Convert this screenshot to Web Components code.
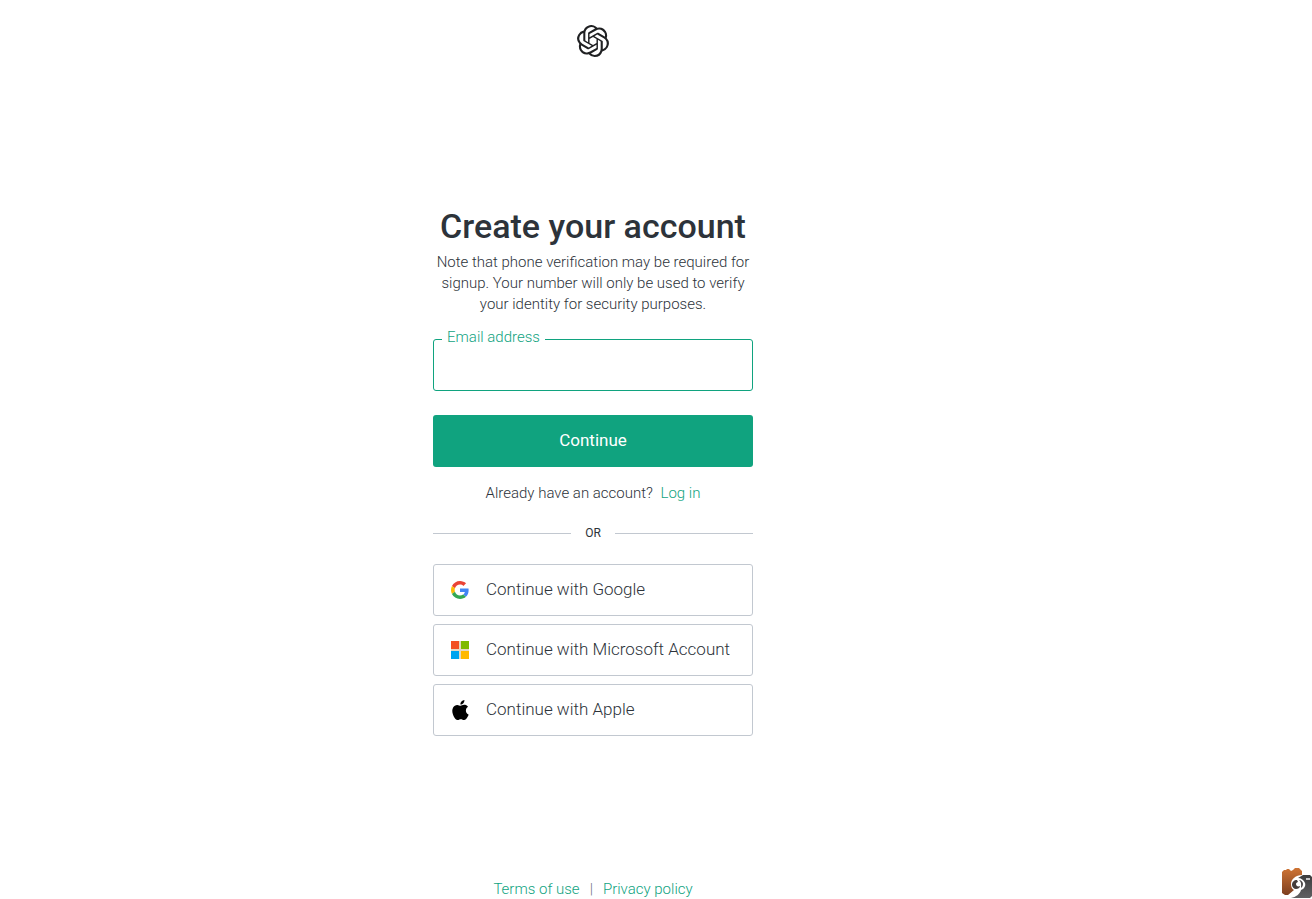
<!DOCTYPE html>
<html lang="en">
<head>
  <meta charset="utf-8">
  <meta name="viewport" content="width=device-width, initial-scale=1">
  <title>Create your account</title>
  <style>
    body {
      margin: 0;
      background: #fff;
      color: #2d333a;
      font-family: Roboto, 'Liberation Sans', sans-serif;
      font-size: 15px;
      font-weight: 300;
    }
  </style>
</head>
<body>
  <signup-page>
    <brand-logo slot="header"></brand-logo>
    <signup-form>
      <social-button provider="google">Continue with Google</social-button>
      <social-button provider="microsoft">Continue with Microsoft Account</social-button>
      <social-button provider="apple">Continue with Apple</social-button>
    </signup-form>
    <page-footer slot="footer"></page-footer>
  </signup-page>
  <capture-badge></capture-badge>

  <script>
    const icons = {
      google: /* html */`
        <svg viewBox="0 0 48 48" width="18" height="18" aria-hidden="true">
          <path fill="#EA4335" d="M24 9.5c3.54 0 6.71 1.22 9.21 3.6l6.85-6.85C35.9 2.38 30.47 0 24 0 14.62 0 6.51 5.38 2.56 13.22l7.98 6.19C12.43 13.72 17.74 9.5 24 9.5z"/>
          <path fill="#4285F4" d="M46.98 24.55c0-1.57-.15-3.09-.38-4.55H24v9.02h12.94c-.58 2.96-2.26 5.48-4.78 7.18l7.73 6c4.51-4.18 7.09-10.36 7.09-17.65z"/>
          <path fill="#FBBC05" d="M10.53 28.59c-.48-1.45-.76-2.99-.76-4.59s.27-3.14.76-4.59l-7.98-6.19C.92 16.46 0 20.12 0 24c0 3.88.92 7.54 2.56 10.78l7.97-6.19z"/>
          <path fill="#34A853" d="M24 48c6.48 0 11.93-2.13 15.89-5.81l-7.73-6c-2.15 1.45-4.92 2.3-8.16 2.3-6.26 0-11.57-4.22-13.47-9.91l-7.98 6.19C6.51 42.62 14.62 48 24 48z"/>
        </svg>`,
      microsoft: /* html */`
        <svg viewBox="0 0 18 18" width="18" height="18" aria-hidden="true">
          <path fill="#e6d9c4" d="M0 8h18v2H0zM8 0h2v18H8z"/>
          <path fill="#f25022" d="M0 0h8v8H0z"/>
          <path fill="#7fba00" d="M10 0h8v8h-8z"/>
          <path fill="#00a4ef" d="M0 10h8v8H0z"/>
          <path fill="#ffb900" d="M10 10h8v8h-8z"/>
        </svg>`,
      apple: /* html */`
        <svg viewBox="1 0 21 24" width="18" height="20" aria-hidden="true">
          <path d="M12.152 6.896c-.948 0-2.415-1.078-3.96-1.04-2.04.027-3.91 1.183-4.961 3.014-2.117 3.675-.546 9.103 1.519 12.09 1.013 1.454 2.208 3.09 3.792 3.039 1.52-.065 2.09-.987 3.935-.987 1.831 0 2.35.987 3.96.948 1.637-.026 2.676-1.48 3.676-2.948 1.156-1.688 1.636-3.325 1.662-3.415-.039-.013-3.182-1.221-3.22-4.857-.026-3.04 2.48-4.494 2.597-4.559-1.429-2.09-3.623-2.324-4.39-2.376-2-.156-3.675 1.09-4.61 1.09zM15.53 3.83c.843-1.012 1.4-2.427 1.245-3.83-1.207.052-2.662.805-3.532 1.818-.78.896-1.454 2.338-1.273 3.714 1.338.104 2.715-.688 3.559-1.701"/>
        </svg>`
    }

    class SignupPage extends HTMLElement {
      constructor () {
        super()
        this.shadow = this.attachShadow({ mode: 'open' })
      }

      connectedCallback () {
        this.render()
      }

      render () {
        this.shadow.innerHTML =
          /* html */`
            <style>
              :host {
                display: flex;
                flex-direction: column;
                align-items: center;
                box-sizing: border-box;
                min-height: 100vh;
                padding-right: 126px;
              }

              header {
                padding-top: 25px;
              }

              main {
                width: 100%;
                max-width: 320px;
                padding: 149px 0 40px;
              }

              footer {
                margin-top: auto;
              }
            </style>

            <header><slot name="header"></slot></header>
            <main><slot></slot></main>
            <footer><slot name="footer"></slot></footer>
          `
      }
    }

    customElements.define('signup-page', SignupPage)

    class BrandLogo extends HTMLElement {
      constructor () {
        super()
        this.shadow = this.attachShadow({ mode: 'open' })
      }

      connectedCallback () {
        this.render()
      }

      render () {
        this.shadow.innerHTML =
          /* html */`
            <style>
              :host {
                display: block;
              }

              svg {
                display: block;
                fill: #202123;
              }
            </style>

            <svg viewBox="0 0 24 24" width="32" height="32" aria-hidden="true">
              <path d="M22.2819 9.8211a5.9847 5.9847 0 0 0-.5157-4.9108 6.0462 6.0462 0 0 0-6.5098-2.9A6.0651 6.0651 0 0 0 4.9807 4.1818a5.9847 5.9847 0 0 0-3.9977 2.9 6.0462 6.0462 0 0 0 .7427 7.0966 5.98 5.98 0 0 0 .511 4.9107 6.051 6.051 0 0 0 6.5146 2.9001A5.9847 5.9847 0 0 0 13.2599 24a6.0557 6.0557 0 0 0 5.7718-4.2058 5.9894 5.9894 0 0 0 3.9977-2.9001 6.0557 6.0557 0 0 0-.7475-7.0729zm-9.022 12.6081a4.4755 4.4755 0 0 1-2.8764-1.0408l.1419-.0804 4.7783-2.7582a.7948.7948 0 0 0 .3927-.6813v-6.7369l2.02 1.1686a.071.071 0 0 1 .038.052v5.5826a4.504 4.504 0 0 1-4.4945 4.4944zm-9.6607-4.1254a4.4708 4.4708 0 0 1-.5346-3.0137l.142.0852 4.783 2.7582a.7712.7712 0 0 0 .7806 0l5.8428-3.3685v2.3324a.0804.0804 0 0 1-.0332.0615L9.74 19.9502a4.4992 4.4992 0 0 1-6.1408-1.6464zM2.3408 7.8956a4.485 4.485 0 0 1 2.3655-1.9728V11.6a.7664.7664 0 0 0 .3879.6765l5.8144 3.3543-2.0201 1.1685a.0757.0757 0 0 1-.071 0l-4.8303-2.7865A4.504 4.504 0 0 1 2.3408 7.872zm16.5963 3.8558L13.1038 8.364 15.1192 7.2a.0757.0757 0 0 1 .071 0l4.8303 2.7913a4.4944 4.4944 0 0 1-.6765 8.1042v-5.6772a.79.79 0 0 0-.407-.667zm2.0107-3.0231l-.142-.0852-4.7735-2.7818a.7759.7759 0 0 0-.7854 0L9.409 9.2297V6.8974a.0662.0662 0 0 1 .0284-.0615l4.8303-2.7866a4.4992 4.4992 0 0 1 6.6802 4.66zM8.3065 12.863l-2.02-1.1638a.0804.0804 0 0 1-.038-.0567V6.0742a4.4992 4.4992 0 0 1 7.3757-3.4537l-.142.0805L8.704 5.459a.7948.7948 0 0 0-.3927.6813zm1.0976-2.3654l2.602-1.4998 2.6069 1.4998v2.9994l-2.5974 1.4997-2.6067-1.4997Z"/>
            </svg>
          `
      }
    }

    customElements.define('brand-logo', BrandLogo)

    class SignupForm extends HTMLElement {
      constructor () {
        super()
        this.shadow = this.attachShadow({ mode: 'open' })
      }

      connectedCallback () {
        this.render()
        this.shadow.querySelector('form').addEventListener('submit', event => event.preventDefault())
      }

      render () {
        this.shadow.innerHTML =
          /* html */`
            <style>
              :host {
                display: block;
                text-align: center;
              }

              h1 {
                margin: 0;
                font-size: 34px;
                font-weight: 500;
                line-height: 40px;
                white-space: nowrap;
              }

              p {
                margin: 0;
                line-height: 21px;
              }

              .intro {
                padding-top: 6px;
              }

              form {
                margin-top: 24px;
              }

              .field {
                position: relative;
              }

              label {
                position: absolute;
                top: -12px;
                left: 9px;
                padding: 0 5px;
                background: #fff;
                color: #10a37f;
                line-height: 20px;
              }

              input {
                display: block;
                box-sizing: border-box;
                width: 100%;
                height: 52px;
                padding: 0 16px;
                border: 1px solid #10a37f;
                border-radius: 3px;
                outline: 0;
                background: #fff;
                color: inherit;
                font: inherit;
                font-size: 17px;
              }

              button {
                display: block;
                width: 100%;
                height: 52px;
                margin-top: 24px;
                padding: 0 16px 2px;
                border: 0;
                border-radius: 3px;
                background: #10a37f;
                color: #fff;
                font: inherit;
                font-size: 17px;
                font-weight: 400;
                cursor: pointer;
              }

              .login {
                padding-top: 16px;
              }

              a {
                margin-left: 4px;
                color: #10a37f;
                text-decoration: none;
              }

              .divider {
                display: flex;
                align-items: center;
                gap: 14px;
                padding: 20px 0 22px;
                font-size: 12px;
                font-weight: 400;
                line-height: 18px;
              }

              .divider::before,
              .divider::after {
                content: '';
                flex: 1;
                height: 1px;
                background: #c2c8d0;
              }

              .social {
                display: flex;
                flex-direction: column;
                gap: 8px;
              }
            </style>

            <h1>Create your account</h1>
            <p class="intro">Note that phone verification may be required for signup. Your number will only be used to verify your identity for security purposes.</p>
            <form>
              <div class="field">
                <input id="email" type="email" autocomplete="email">
                <label for="email">Email address</label>
              </div>
              <button type="submit">Continue</button>
            </form>
            <p class="login">Already have an account? <a href="#login">Log in</a></p>
            <div class="divider">OR</div>
            <div class="social"><slot></slot></div>
          `
      }
    }

    customElements.define('signup-form', SignupForm)

    class SocialButton extends HTMLElement {
      constructor () {
        super()
        this.shadow = this.attachShadow({ mode: 'open' })
      }

      connectedCallback () {
        this.render()
      }

      render () {
        this.shadow.innerHTML =
          /* html */`
            <style>
              :host {
                display: block;
              }

              button {
                display: flex;
                align-items: center;
                gap: 17px;
                width: 100%;
                height: 52px;
                padding: 0 17px;
                border: 1px solid #c2c8d0;
                border-radius: 3px;
                background: #fff;
                color: #2d333a;
                font: inherit;
                font-size: 17px;
                text-align: left;
                cursor: pointer;
              }

              svg {
                flex: none;
              }

              span {
                padding-bottom: 2px;
              }
            </style>

            <button type="button">
              ${icons[this.getAttribute('provider')]}
              <span><slot></slot></span>
            </button>
          `
      }
    }

    customElements.define('social-button', SocialButton)

    class PageFooter extends HTMLElement {
      constructor () {
        super()
        this.shadow = this.attachShadow({ mode: 'open' })
      }

      connectedCallback () {
        this.render()
      }

      render () {
        this.shadow.innerHTML =
          /* html */`
            <style>
              :host {
                display: flex;
                gap: 10px;
                color: #6e6e80;
                line-height: 20px;
              }

              a {
                color: #10a37f;
                text-decoration: none;
              }
            </style>

            <a href="#terms">Terms of use</a>
            <span>|</span>
            <a href="#privacy">Privacy policy</a>
          `
      }
    }

    customElements.define('page-footer', PageFooter)

    class CaptureBadge extends HTMLElement {
      constructor () {
        super()
        this.shadow = this.attachShadow({ mode: 'open' })
      }

      connectedCallback () {
        this.render()
      }

      render () {
        this.shadow.innerHTML =
          /* html */`
            <style>
              :host {
                position: fixed;
                right: 0;
                bottom: 0;
              }

              svg {
                display: block;
              }
            </style>

            <svg viewBox="0 0 30 31" width="30" height="31" aria-hidden="true">
              <defs>
                <linearGradient id="copper" x1="0" y1="0" x2="0" y2="1">
                  <stop offset="0" stop-color="#cf7434"/>
                  <stop offset="1" stop-color="#7d3f20"/>
                </linearGradient>
                <linearGradient id="steel" x1="0" y1="0" x2="0" y2="1">
                  <stop offset="0" stop-color="#3c3c3e"/>
                  <stop offset="1" stop-color="#606062"/>
                </linearGradient>
              </defs>
              <path fill="url(#copper)" d="M0 4l2-2h2l1-1h2l2 2 2-1 2-2h4l3 3v4c-6 0-11 4-11 9 0 3 1 5 3 6l-6 5H3l-3-2z"/>
              <path fill="url(#steel)" d="M9 30c5-1 9-4 10-8 3-1 5-4 4-7-1-3-4-5-7-5l5-3h7l2 2v19l-2 2z"/>
              <path fill="#443c3a" d="M15 12c-3 0-5 2-5 5 0 2 2 4 4 4s4-1 4-3c-2 1-4 0-4-2 0-1 1-2 2-2z"/>
              <path fill="#4a4748" d="M17 12c2 0 4 2 4 4s-1 3-2 4c0-3 1-5-2-8z"/>
              <path fill="#c4c4c6" d="M24 10h4v2h-4z"/>
            </svg>
          `
      }
    }

    customElements.define('capture-badge', CaptureBadge)
  </script>
</body>
</html>
